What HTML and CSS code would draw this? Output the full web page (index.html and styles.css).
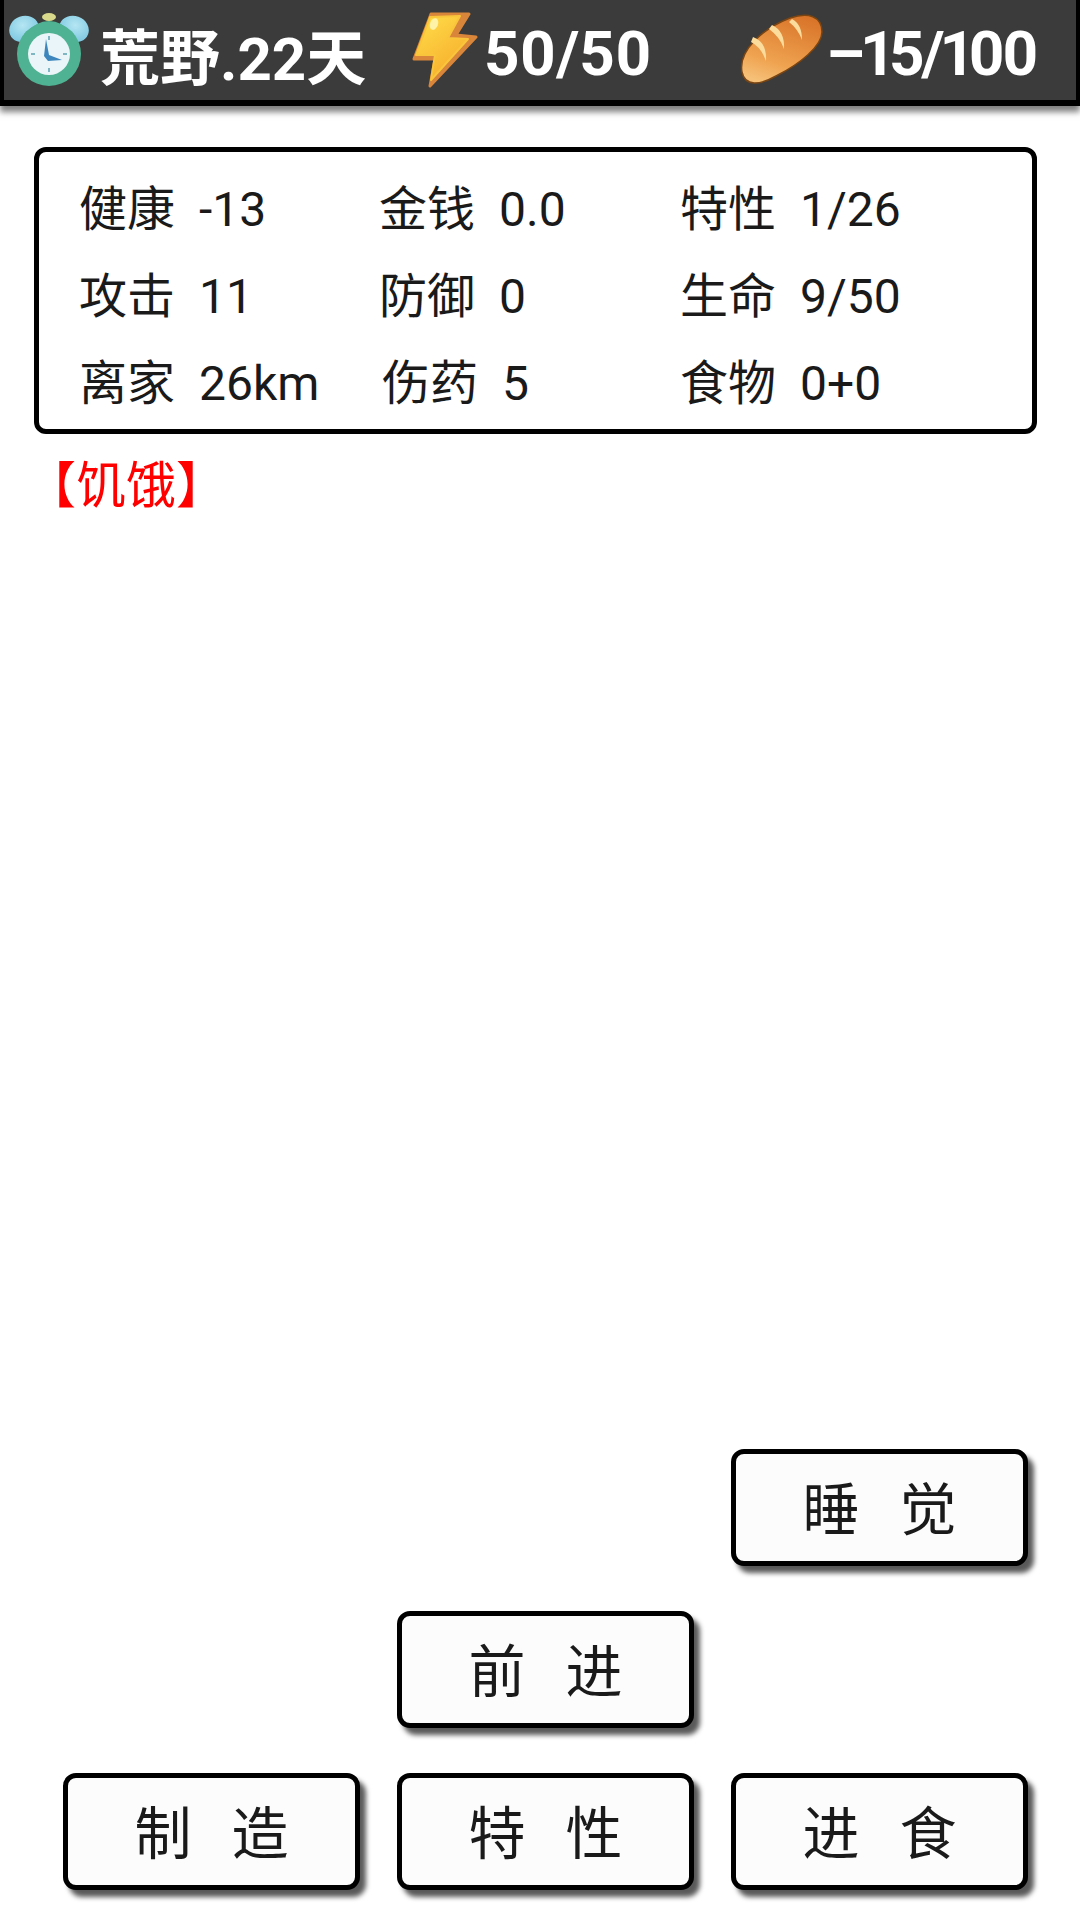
FILE: index.html
```html
<!DOCTYPE html>
<html lang="zh-CN">

<head>
    <meta charset="UTF-8">
    <title>荒野</title>
    <link rel="stylesheet" href="styles.css">
</head>

<body>
    <!-- top status bar -->
    <header class="topbar">
        <div class="topbar-item">
            <svg class="icon-clock" width="82" height="76" viewBox="0 0 82 76">
                <defs>
                    <radialGradient id="bell" cx="50%" cy="35%" r="65%">
                        <stop offset="0" stop-color="#b5e6f3" />
                        <stop offset="1" stop-color="#7cc7e0" />
                    </radialGradient>
                </defs>
                <ellipse cx="16" cy="17" rx="15" ry="13" fill="url(#bell)" transform="rotate(-20 16 17)" />
                <ellipse cx="66" cy="17" rx="15" ry="13" fill="url(#bell)" transform="rotate(20 66 17)" />
                <ellipse cx="41" cy="5" rx="7" ry="4" fill="#d8d98a" />
                <path d="M16 22 Q41 -4 66 22 L60 30 H22 Z" fill="#4fb292" />
                <circle cx="41" cy="42" r="32" fill="#4fb292" />
                <circle cx="41" cy="42" r="21" fill="#e9f5f8" />
                <path d="M41 24v4M41 56v4M23 42h4M55 42h4" stroke="#7fb6c4" stroke-width="2" />
                <path d="M38 27 L41 43 L54 48 L40 49 L36 44 Z" fill="#3c86bd" />
            </svg>
            <span class="topbar-text">荒野.22天</span>
        </div>
        <div class="topbar-item">
            <svg class="icon-bolt" width="68" height="76" viewBox="0 0 68 76">
                <defs>
                    <linearGradient id="bolt" x1="0" y1="0" x2="0.6" y2="1">
                        <stop offset="0" stop-color="#ffdf4a" />
                        <stop offset="1" stop-color="#f7ad2c" />
                    </linearGradient>
                </defs>
                <path d="M21 2 L59 2 L46 23 L66 25 L20 74 L25 47 L4 47 Z" fill="#d9853a" stroke="#d9853a" stroke-width="3" stroke-linejoin="round" />
                <path d="M20 5 L50 4 L38 26 L58 27 L21 68 L25 43 L6 43 Z" fill="url(#bolt)" stroke="#f9c53a" stroke-width="2" stroke-linejoin="round" />
                <ellipse cx="24" cy="12" rx="4" ry="6" fill="#fff3a8" transform="rotate(20 24 12)" />
            </svg>
            <span class="topbar-text topbar-num">50/50</span>
        </div>
        <div class="topbar-item">
            <svg class="icon-bread" width="84" height="72" viewBox="0 0 84 72">
                <defs>
                    <linearGradient id="bread" x1="0.7" y1="0" x2="0.3" y2="1">
                        <stop offset="0" stop-color="#d9752a" />
                        <stop offset="0.7" stop-color="#efa350" />
                        <stop offset="1" stop-color="#f6c078" />
                    </linearGradient>
                </defs>
                <path d="M2 58 C-2 36 24 14 50 4 C68 -2 82 2 82 18 C82 32 60 50 36 62 C20 71 5 73 2 58 Z" fill="url(#bread)" stroke="#7a4512" stroke-width="1.5" />
                <path d="M13 23 Q27 28 26 47 Q21 33 11 28 Z" fill="#fbdc9c" />
                <path d="M32 11 Q45 17 44 35 Q40 23 29 15 Z" fill="#fbdc9c" />
                <path d="M52 5 Q62 10 62 26 Q58 15 49 8 Z" fill="#fbdc9c" />
            </svg>
            <span class="topbar-text topbar-num topbar-food">–15/100</span>
        </div>
    </header>

    <!-- player stats -->
    <section class="stats">
        <div class="stat"><span class="stat-label">健康</span><span>-13</span></div>
        <div class="stat"><span class="stat-label">金钱</span><span>0.0</span></div>
        <div class="stat"><span class="stat-label">特性</span><span>1/26</span></div>
        <div class="stat"><span class="stat-label">攻击</span><span>11</span></div>
        <div class="stat"><span class="stat-label">防御</span><span>0</span></div>
        <div class="stat"><span class="stat-label">生命</span><span>9/50</span></div>
        <div class="stat"><span class="stat-label">离家</span><span>26km</span></div>
        <div class="stat stat-nudge"><span class="stat-label">伤药</span><span>5</span></div>
        <div class="stat"><span class="stat-label">食物</span><span>0+0</span></div>
    </section>

    <p class="status">【饥饿】</p>

    <!-- actions -->
    <div class="actions">
        <button class="action action-sleep" type="button">睡 觉</button>
        <button class="action action-forward" type="button">前 进</button>
        <button class="action action-make" type="button">制 造</button>
        <button class="action" type="button">特 性</button>
        <button class="action" type="button">进 食</button>
    </div>
</body>

</html>
```

FILE: styles.css
```css
/* page */
body {
    margin: 0;
    height: 1921px;
    display: flex;
    flex-direction: column;
    background-color: #fff;
    color: #1a1a1a;
    font-family: Roboto, "Noto Sans CJK SC", sans-serif;
    overflow: hidden;
}

/* top bar */
.topbar {
    height: 100px;
    flex-shrink: 0;
    display: grid;
    grid-template-columns: 402px 330px 1fr;
    padding-left: 4px;
    background-color: #3b3b3b;
    border: 4px solid #000;
    border-top: none;
    border-bottom-width: 6px;
    box-shadow: 0 6px 6px rgba(0, 0, 0, 0.5);
}

.topbar-item {
    display: flex;
    align-items: center;
}

.topbar-text {
    padding-top: 6px;
    color: #fff;
    font-size: 60px;
    font-weight: 700;
    white-space: nowrap;
}

.topbar-num {
    font-size: 62px;
    font-variant-numeric: proportional-nums;
}

.topbar-food {
    letter-spacing: -3px;
}

.icon-clock {
    margin-right: 10px;
}

.icon-bolt {
    margin-right: 6px;
}

.icon-bread {
    margin-right: 2px;
}

/* stats panel */
.stats {
    width: 1003px;
    height: 287px;
    box-sizing: border-box;
    margin: 41px 0 0 34px;
    padding: 10px 0 0 40px;
    display: grid;
    grid-template-columns: 300px 301px 1fr;
    grid-auto-rows: 87px;
    border: 5px solid #000;
    border-radius: 12px;
}

.stat {
    display: flex;
    align-items: baseline;
    padding-top: 8px;
    box-sizing: border-box;
    font-size: 48px;
}

.stat-label {
    width: 120px;
}

.stat-nudge {
    padding-left: 3px;
}

/* status line */
.status {
    margin: 11px 0 0 26px;
    color: #f00;
    font-size: 50px;
}

/* buttons */
.actions {
    margin: auto 0 31px 63px;
    display: grid;
    grid-template-columns: repeat(3, 297px);
    grid-auto-rows: 117px;
    gap: 45px 37px;
}

.action {
    background-color: #fcfcfc;
    color: #1a1a1a;
    font-family: inherit;
    font-size: 57px;
    word-spacing: 26px;
    border: 5px solid #000;
    border-radius: 13px;
    box-shadow: 6px 7px 5px rgba(0, 0, 0, 0.65);
    padding: 0 0 6px;
}

.action-sleep {
    grid-column: 3;
}

.action-forward {
    grid-column: 2;
}

.action-make {
    grid-column: 1;
}
```
